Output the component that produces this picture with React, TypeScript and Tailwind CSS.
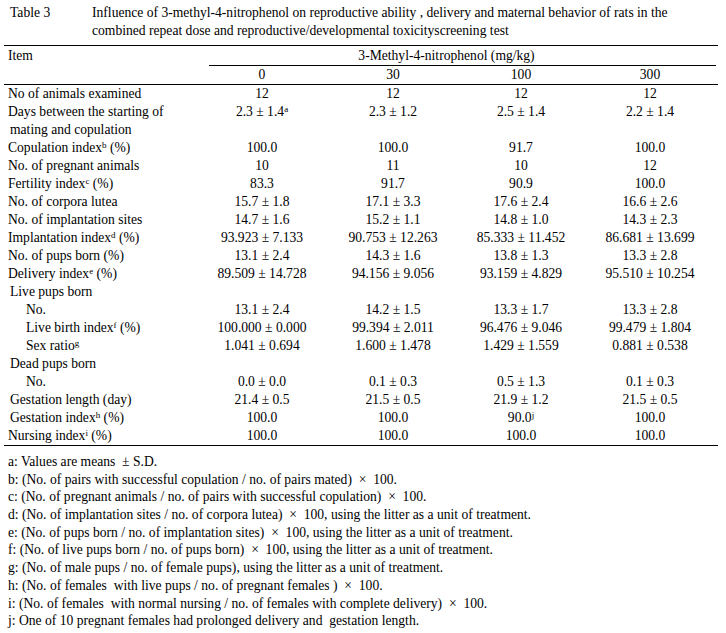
const font = { fontFamily: '"Liberation Serif", "Times New Roman", serif' }

type Row = { label: React.ReactNode; values?: React.ReactNode[]; indent?: number }

const Sup = ({ children }: { children: React.ReactNode }) => (
  <span className="inline-block align-top pt-[2px] text-[9px] leading-[9px]">{children}</span>
)

const rows: Row[] = [
  { label: "No of animals examined", values: ["12", "12", "12", "12"] },
  {
    label: "Days between the starting of",
    values: [
      <>2.3 ± 1.4<Sup>a</Sup></>,
      "2.3 ± 1.2",
      "2.5 ± 1.4",
      "2.2 ± 1.4",
    ],
  },
  { label: "mating and copulation", indent: 1 },
  { label: <>Copulation index<Sup>b</Sup> (%)</>, values: ["100.0", "100.0", "91.7", "100.0"] },
  { label: "No. of pregnant animals", values: ["10", "11", "10", "12"] },
  { label: <>Fertility index<Sup>c</Sup> (%)</>, values: ["83.3", "91.7", "90.9", "100.0"] },
  { label: "No. of corpora lutea", values: ["15.7 ± 1.8", "17.1 ± 3.3", "17.6 ± 2.4", "16.6 ± 2.6"] },
  { label: "No. of implantation sites", values: ["14.7 ± 1.6", "15.2 ± 1.1", "14.8 ± 1.0", "14.3 ± 2.3"] },
  {
    label: <>Implantation index<Sup>d</Sup> (%)</>,
    values: ["93.923 ± 7.133", "90.753 ± 12.263", "85.333 ± 11.452", "86.681 ± 13.699"],
  },
  { label: "No. of pups born (%)", values: ["13.1 ± 2.4", "14.3 ± 1.6", "13.8 ± 1.3", "13.3 ± 2.8"] },
  {
    label: <>Delivery index<Sup>e</Sup> (%)</>,
    values: ["89.509 ± 14.728", "94.156 ± 9.056", "93.159 ± 4.829", "95.510 ± 10.254"],
  },
  { label: "Live pups born", indent: 1 },
  { label: "No.", indent: 2, values: ["13.1 ± 2.4", "14.2 ± 1.5", "13.3 ± 1.7", "13.3 ± 2.8"] },
  {
    label: <>Live birth index<Sup>f</Sup> (%)</>,
    indent: 2,
    values: ["100.000 ± 0.000", "99.394 ± 2.011", "96.476 ± 9.046", "99.479 ± 1.804"],
  },
  {
    label: <>Sex ratio<Sup>g</Sup></>,
    indent: 2,
    values: ["1.041 ± 0.694", "1.600 ± 1.478", "1.429 ± 1.559", "0.881 ± 0.538"],
  },
  { label: "Dead pups born", indent: 1 },
  { label: "No.", indent: 2, values: ["0.0 ± 0.0", "0.1 ± 0.3", "0.5 ± 1.3", "0.1 ± 0.3"] },
  { label: "Gestation length (day)", indent: 1, values: ["21.4 ± 0.5", "21.5 ± 0.5", "21.9 ± 1.2", "21.5 ± 0.5"] },
  {
    label: <>Gestation index<Sup>h</Sup> (%)</>,
    indent: 1,
    values: ["100.0", "100.0", <>90.0<Sup>j</Sup></>, "100.0"],
  },
  { label: <>Nursing index<Sup>i</Sup> (%)</>, values: ["100.0", "100.0", "100.0", "100.0"] },
]

const notes = [
  "a: Values are means  ± S.D.",
  "b: (No. of pairs with successful copulation / no. of pairs mated)  ×  100.",
  "c: (No. of pregnant animals / no. of pairs with successful copulation)  ×  100.",
  "d: (No. of implantation sites / no. of corpora lutea)  ×  100, using the litter as a unit of treatment.",
  "e: (No. of pups born / no. of implantation sites)  ×  100, using the litter as a unit of treatment.",
  "f: (No. of live pups born / no. of pups born)  ×  100, using the litter as a unit of treatment.",
  "g: (No. of male pups / no. of female pups), using the litter as a unit of treatment.",
  "h: (No. of females  with live pups / no. of pregnant females )  ×  100.",
  "i: (No. of females  with normal nursing / no. of females with complete delivery)  ×  100.",
  "j: One of 10 pregnant females had prolonged delivery and  gestation length.",
]

const cols = "grid grid-cols-[192px_132px_130px_126px_132px]"

export default function App() {
  return (
    <div className="min-h-screen w-[726px] bg-white text-[13.6px] leading-[18px] text-black" style={font}>
      {/* Title */}
      <div className="flex pt-[4px] pl-[10px]">
        <div className="w-[82px] shrink-0">Table 3</div>
        <div className="whitespace-nowrap">
          <div>Influence of 3-methyl-4-nitrophenol on reproductive ability , delivery and maternal behavior of rats in the</div>
          <div>combined repeat dose and reproductive/developmental toxicityscreening test</div>
        </div>
      </div>

      {/* Table */}
      <div className="mx-[4px] mt-[5px] w-[714px] border-t border-b border-black">
        <div className={cols}>
          <div className="col-start-1 row-span-2 pl-[4px] pt-[1px]">Item</div>
          <div className="col-span-4 ml-[13px] h-[20px] border-b border-black pt-[1px] pr-[32px] text-center">
            3-Methyl-4-nitrophenol (mg/kg)
          </div>
          {["0", "30", "100", "300"].map((d) => (
            <div key={d} className="h-[18px] text-center">
              {d}
            </div>
          ))}
        </div>
        <div className="border-t border-black">
          {rows.map((r, i) => (
            <div key={i} className={`${cols} h-[18px]`}>
              <div
                className={
                  r.indent === 2
                    ? "pl-[22px] whitespace-nowrap"
                    : r.indent === 1
                      ? "pl-[6px] whitespace-nowrap"
                      : "pl-[4px] whitespace-nowrap"
                }
              >
                {r.label}
              </div>
              {(r.values ?? ["", "", "", ""]).map((v, j) => (
                <div key={j} className="whitespace-nowrap text-center">
                  {v}
                </div>
              ))}
            </div>
          ))}
        </div>
      </div>

      {/* Footnotes */}
      <div className="whitespace-pre pl-[8px] pt-[7px]">
        {notes.map((n) => (
          <div key={n} className="h-[17.7px]">
            {n}
          </div>
        ))}
      </div>
    </div>
  )
}
